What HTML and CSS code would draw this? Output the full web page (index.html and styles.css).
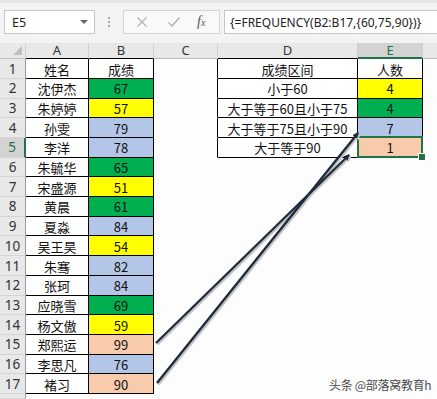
FILE: index.html
```html
<!DOCTYPE html>
<html lang="zh">
<head>
<meta charset="utf-8">
<link rel="stylesheet" href="styles.css">
</head>
<body>
<div class="app">
  <div class="toolbar">
    <div class="namebox"><span class="ref">E5</span><span class="caret"></span></div>
    <div class="dots"><i></i><i></i><i></i></div>
    <div class="fxbox">
      <svg class="ico" width="12" height="12" viewBox="0 0 12 12"><path d="M1.5 1.5L10.5 10.5M10.5 1.5L1.5 10.5" stroke="#b4b4b4" stroke-width="1.3" fill="none"/></svg>
      <svg class="ico" width="14" height="12" viewBox="0 0 14 12"><path d="M1.5 6.5L5 10L12.5 1.5" stroke="#b4b4b4" stroke-width="1.4" fill="none"/></svg>
      <span class="fx">f<small>x</small></span>
    </div>
    <div class="formula">{=FREQUENCY(B2:B17,{60,75,90})}</div>
  </div>

  <div class="sheet">
    <div class="ch corner"><span class="tri"></span></div>
    <div class="ch ha">A</div>
    <div class="ch hb">B</div>
    <div class="ch hc">C</div>
    <div class="ch hd">D</div>
    <div class="ch he">E</div>
    <div class="ch hf"></div>

    <div class="rh">1</div><div class="c t">姓名</div><div class="c t">成绩</div><div class="c cl"></div><div class="c t">成绩区间</div><div class="c t">人数</div><div class="c"></div>
    <div class="rh">2</div><div class="c t">沈伊杰</div><div class="c t g">67</div><div class="c cl"></div><div class="c t">小于60</div><div class="c t y">4</div><div class="c"></div>
    <div class="rh">3</div><div class="c t">朱婷婷</div><div class="c t y">57</div><div class="c cl"></div><div class="c t">大于等于60且小于75</div><div class="c t g">4</div><div class="c"></div>
    <div class="rh">4</div><div class="c t">孙雯</div><div class="c t b">79</div><div class="c cl"></div><div class="c t">大于等于75且小于90</div><div class="c t b">7</div><div class="c"></div>
    <div class="rh sel">5</div><div class="c t">李洋</div><div class="c t b">78</div><div class="c cl"></div><div class="c t">大于等于90</div><div class="c t p active">1</div><div class="c"></div>
    <div class="rh">6</div><div class="c t">朱毓华</div><div class="c t g">65</div><div class="c"></div><div class="c"></div><div class="c"></div><div class="c"></div>
    <div class="rh">7</div><div class="c t">宋盛源</div><div class="c t y">51</div><div class="c"></div><div class="c"></div><div class="c"></div><div class="c"></div>
    <div class="rh">8</div><div class="c t">黄晨</div><div class="c t g">61</div><div class="c"></div><div class="c"></div><div class="c"></div><div class="c"></div>
    <div class="rh">9</div><div class="c t">夏淼</div><div class="c t b">84</div><div class="c"></div><div class="c"></div><div class="c"></div><div class="c"></div>
    <div class="rh">10</div><div class="c t">吴王昊</div><div class="c t y">54</div><div class="c"></div><div class="c"></div><div class="c"></div><div class="c"></div>
    <div class="rh">11</div><div class="c t">朱骞</div><div class="c t b">82</div><div class="c"></div><div class="c"></div><div class="c"></div><div class="c"></div>
    <div class="rh">12</div><div class="c t">张珂</div><div class="c t b">84</div><div class="c"></div><div class="c"></div><div class="c"></div><div class="c"></div>
    <div class="rh">13</div><div class="c t">应晓雪</div><div class="c t g">69</div><div class="c"></div><div class="c"></div><div class="c"></div><div class="c"></div>
    <div class="rh">14</div><div class="c t">杨文傲</div><div class="c t y">59</div><div class="c"></div><div class="c"></div><div class="c"></div><div class="c"></div>
    <div class="rh">15</div><div class="c t">郑熙运</div><div class="c t p">99</div><div class="c"></div><div class="c"></div><div class="c"></div><div class="c"></div>
    <div class="rh">16</div><div class="c t">李思凡</div><div class="c t b">76</div><div class="c"></div><div class="c"></div><div class="c"></div><div class="c"></div>
    <div class="rh">17</div><div class="c t">褚习</div><div class="c t p">90</div><div class="c"></div><div class="c"></div><div class="c"></div><div class="c"></div>
    <div class="rh"></div><div class="c"></div><div class="c"></div><div class="c"></div><div class="c"></div><div class="c"></div><div class="c"></div>
  </div>

  <svg class="arrows" width="437" height="399" viewBox="0 0 437 399">
    <defs>
      <marker id="ah" markerWidth="6" markerHeight="6" refX="5" refY="3" orient="auto" markerUnits="userSpaceOnUse">
        <path d="M0 0L6 3L0 6Z" fill="#1f2b3c"/>
      </marker>
      <marker id="ahs" markerWidth="6" markerHeight="6" refX="5" refY="3" orient="auto" markerUnits="userSpaceOnUse">
        <path d="M0 0L6 3L0 6Z" fill="#c8c8c8"/>
      </marker>
    </defs>
    <g stroke="#c4c4c4" stroke-width="2.4" fill="none">
      <line x1="157.5" y1="344.5" x2="350.5" y2="156.5" marker-end="url(#ahs)"/>
      <line x1="158.5" y1="384.5" x2="359.5" y2="134.5" marker-end="url(#ahs)"/>
    </g>
    <g stroke="#1f2b3c" stroke-width="2.4" fill="none">
      <line x1="156" y1="343" x2="349" y2="155" marker-end="url(#ah)"/>
      <line x1="157" y1="383" x2="358" y2="133" marker-end="url(#ah)"/>
    </g>
  </svg>

  <div class="watermark">头条 @部落窝教育h</div>
</div>
</body>
</html>
```

FILE: styles.css
```css
* { box-sizing: border-box; }
html, body { margin: 0; padding: 0; }
body {
  width: 437px;
  height: 399px;
  overflow: hidden;
  background: #ffffff;
  font-family: "Noto Sans CJK SC", "Noto Sans", sans-serif;
}
.app {
  position: relative;
  width: 437px;
  height: 399px;
  overflow: hidden;
}

/* toolbar */
.toolbar {
  height: 43px;
  background: #f3f3f3;
  border-top: 3px solid #e6e6e6;
  display: flex;
  align-items: center;
  padding-left: 4px;
  padding-bottom: 2px;
}
.namebox {
  width: 91px;
  height: 24px;
  background: #ffffff;
  border: 1px solid #c6c6c6;
  display: flex;
  align-items: center;
  justify-content: space-between;
  padding: 0 6px 0 7px;
  font-family: "Noto Sans", sans-serif;
  font-size: 12.5px;
  color: #222;
}
.caret {
  width: 0; height: 0;
  border-left: 4px solid transparent;
  border-right: 4px solid transparent;
  border-top: 4px solid #666;
}
.dots {
  width: 28px;
  display: flex;
  flex-direction: column;
  align-items: center;
  gap: 2px;
}
.dots i {
  width: 2px; height: 2px;
  background: #a9a9a9;
  display: block;
}
.fxbox {
  width: 97px;
  height: 24px;
  background: #f9f9f9;
  border: 1px solid #d4d4d4;
  display: flex;
  align-items: center;
  padding-left: 12px;
  gap: 19px;
}
.fx {
  font-family: "Liberation Serif", serif;
  font-style: italic;
  font-size: 14px;
  color: #555;
  margin-left: -3px;
}
.fx small { font-size: 10px; }
.formula {
  flex: 1;
  margin-left: 4px;
  height: 24px;
  background: #ffffff;
  border: 1px solid #c6c6c6;
  border-right: none;
  display: flex;
  align-items: center;
  padding-left: 5px;
  font-family: "Noto Sans", sans-serif;
  font-size: 12px;
  color: #222;
  white-space: nowrap;
}

/* sheet */
.sheet {
  display: grid;
  grid-template-columns: 26px 63px 65px 64px 140px 65px 14px;
  grid-template-rows: 16.3px repeat(17, 19.7px) 1fr;
  height: 356px;
  background: #fdfdfd;
}
.ch {
  background: #e8e8e8;
  border-right: 1px solid #d0d0d0;
  border-bottom: 1px solid #bdbdbd;
  display: flex;
  align-items: center;
  justify-content: center;
  font-family: "Noto Sans", sans-serif;
  font-size: 13px;
  color: #333;
  line-height: 1;
}
.corner { position: relative; }
.corner .tri {
  position: absolute;
  right: 3px; bottom: 3px;
  width: 0; height: 0;
  border-left: 9px solid transparent;
  border-bottom: 9px solid #c0c0c0;
}
.ha, .hb, .hd { border-bottom-color: #000; }
.hc { border-bottom-color: #bdbdbd; }
.he {
  background: #d3d3d3;
  color: #217346;
  border-bottom: 2px solid #217346;
}
.hf { border-right: none; }

.rh {
  background: #e8e8e8;
  border-right: 1px solid #9a9a9a;
  border-bottom: 1px solid #d4d4d4;
  display: flex;
  align-items: center;
  justify-content: center;
  font-family: "Noto Sans", sans-serif;
  font-size: 13.5px;
  color: #333;
}
.rh.sel {
  background: #d3d3d3;
  color: #217346;
  border-right: 2px solid #217346;
}

.c {
  background: #fdfdfd;
  border-right: 1px solid transparent;
  border-bottom: 1px solid transparent;
  display: flex;
  align-items: center;
  justify-content: center;
  font-size: 13px;
  color: #111;
  white-space: nowrap;
  padding-top: 1px;
}
.c.t {
  background: #ffffff;
  border-right-color: #000;
  border-bottom-color: #000;
}
.c.cl { border-right-color: #000; }
.g { background: #00b050 !important; }
.y { background: #ffff00 !important; }
.b { background: #b4c6e7 !important; }
.p { background: #f8cbad !important; }

.active { position: relative; }
.active::after {
  content: "";
  position: absolute;
  left: -1px; top: -2px; right: -1px; bottom: -1px;
  border: 2px solid #217346;
}
.active::before {
  content: "";
  position: absolute;
  right: -4px; bottom: -4px;
  width: 6px; height: 6px;
  background: #217346;
  border: 1px solid #ffffff;
  z-index: 2;
}

.arrows {
  position: absolute;
  left: 0; top: 0;
  pointer-events: none;
}
.watermark {
  position: absolute;
  left: 329px;
  top: 376px;
  font-size: 12px;
  color: #4a4a4a;
  letter-spacing: -0.3px;
  text-shadow: 0 0 2px #fff, 0 0 2px #fff;
}
```
